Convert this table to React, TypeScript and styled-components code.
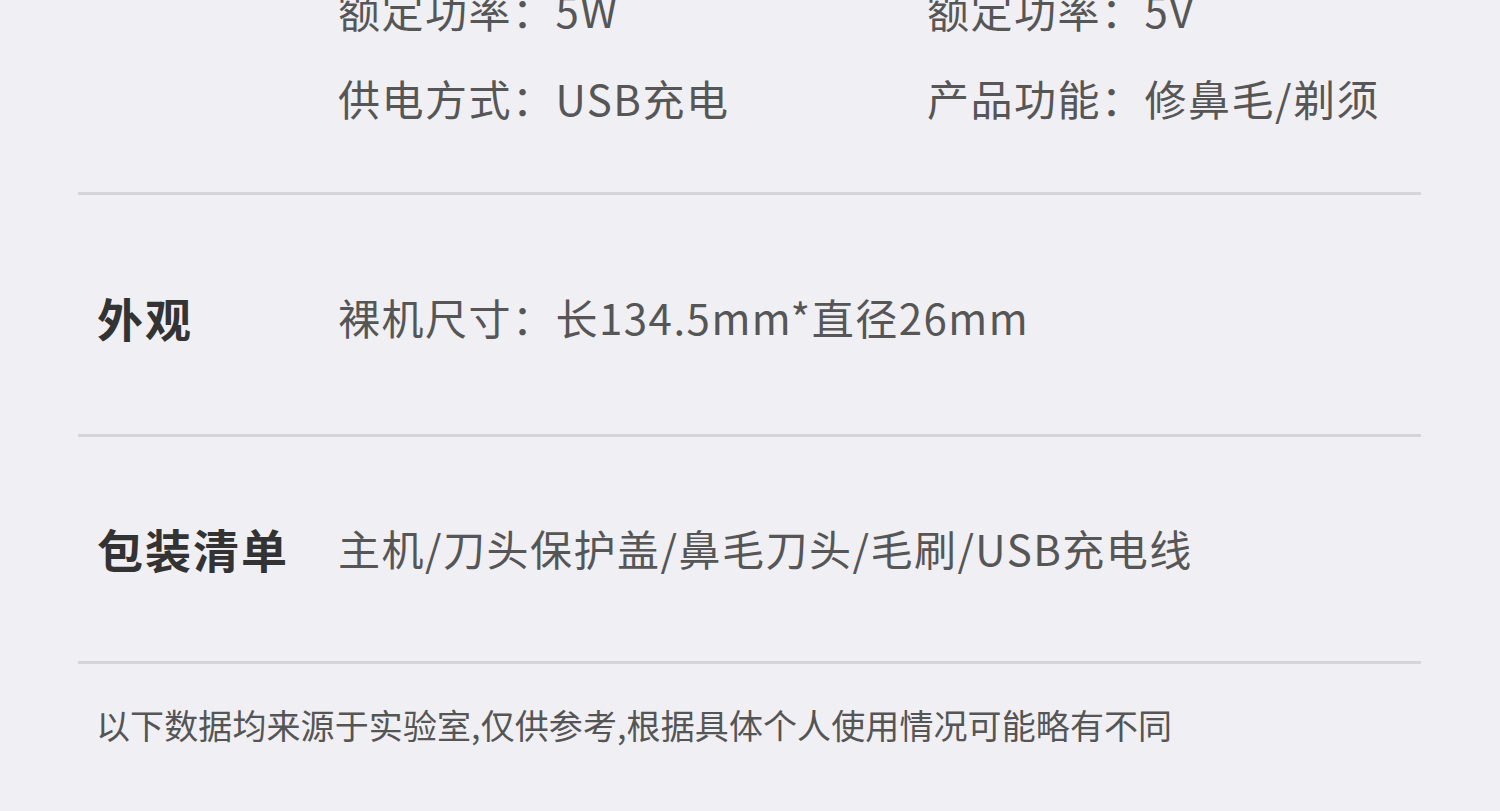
import React from "react";
import styled, { createGlobalStyle } from "styled-components";

const GlobalStyle = createGlobalStyle`
  html, body {
    margin: 0;
    padding: 0;
    background: #f0eff4;
    overflow: hidden;
  }
  body {
    font-family: "Noto Sans CJK SC", "Noto Sans", sans-serif;
  }
`;

const Page = styled.div`
  width: 1500px;
  height: 811px;
  background: #f0eff4;
  padding: 0 79px 0 78px;
  box-sizing: border-box;
  overflow: hidden;
`;

const Section = styled.section<{ $pt: number; $pb: number; $mt?: number }>`
  display: grid;
  grid-template-columns: 260px 1fr;
  align-items: center;
  padding: ${(p) => p.$pt}px 0 ${(p) => p.$pb}px;
  margin-top: ${(p) => p.$mt ?? 0}px;
  border-bottom: 3px solid #d5d4d9;
`;

const Label = styled.div`
  padding-left: 19px;
  font-size: 46px;
  line-height: 60px;
  font-weight: 700;
  color: #333333;
  letter-spacing: 2px;
`;

const Grid = styled.div`
  display: grid;
  grid-template-columns: 589px auto;
  row-gap: 28px;
`;

const Value = styled.div`
  font-size: 42px;
  line-height: 60px;
  color: #565656;
  letter-spacing: 1.5px;
  white-space: nowrap;
`;

const Footer = styled.div`
  padding: 37px 0 0 18px;
  font-size: 34px;
  line-height: 48px;
  color: #555555;
  letter-spacing: 0.1px;
  white-space: nowrap;
`;

export default function App() {
  return (
    <>
      <GlobalStyle />
      <Page>
        <Section $pt={0} $pb={64} $mt={-20}>
          <Label />
          <Grid>
            <Value>额定功率：5W</Value>
            <Value>额定功率：5V</Value>
            <Value>供电方式：USB充电</Value>
            <Value>产品功能：修鼻毛/剃须</Value>
          </Grid>
        </Section>
        <Section $pt={92} $pb={87}>
          <Label>外观</Label>
          <Value>裸机尺寸：长134.5mm*直径26mm</Value>
        </Section>
        <Section $pt={81} $pb={83}>
          <Label>包装清单</Label>
          <Value>主机/刀头保护盖/鼻毛刀头/毛刷/USB充电线</Value>
        </Section>
        <Footer>以下数据均来源于实验室,仅供参考,根据具体个人使用情况可能略有不同</Footer>
      </Page>
    </>
  );
}
